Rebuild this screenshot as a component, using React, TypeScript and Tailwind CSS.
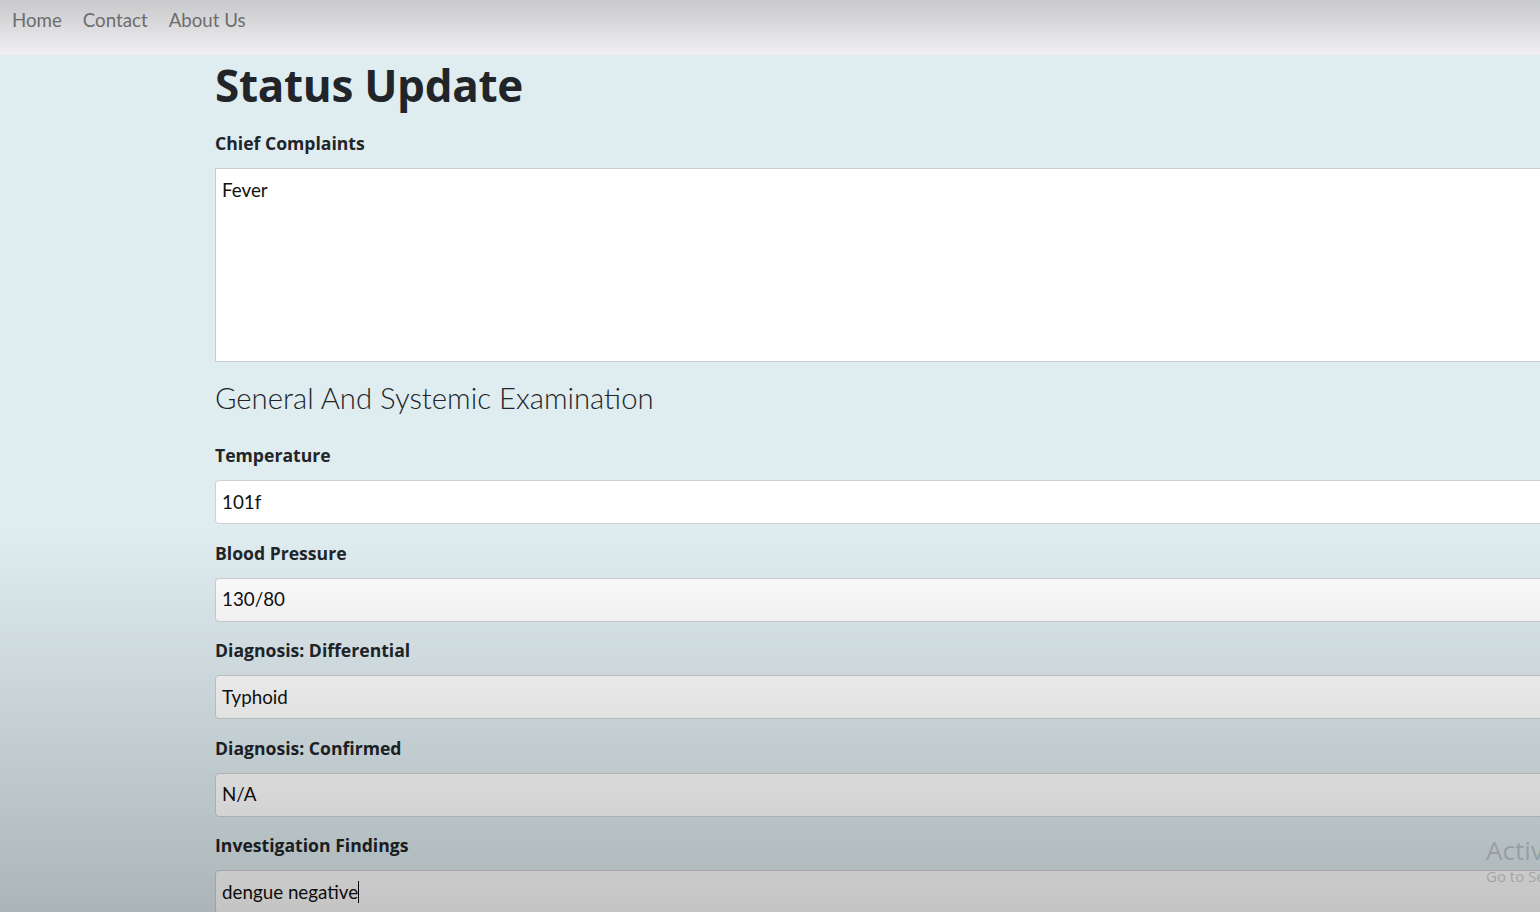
import React from 'react';

const fields = [
  { label: 'Temperature', value: '101f' },
  { label: 'Blood Pressure', value: '130/80' },
  { label: 'Diagnosis: Differential', value: 'Typhoid' },
  { label: 'Diagnosis: Confirmed', value: 'N/A' },
  { label: 'Investigation Findings', value: 'dengue negative', caret: true },
];

const App: React.FC = () => {
  return (
    <div className="relative h-[912px] overflow-hidden bg-[#dfecf0] font-['Lato',sans-serif] text-[#212529]">
      {/* Top nav */}
      <nav className="h-[55px] bg-linear-to-b from-[#c8c9cb] to-[#f1eff1] flex items-start gap-[21px] px-[12px] pt-[8px] text-[18.7px] leading-[24px] text-[#6c6c6c]">
        <a>Home</a>
        <a>Contact</a>
        <a>About Us</a>
      </nav>

      {/* Form */}
      <div className="pl-[215px] w-[1700px]">
        <h1 className="mt-[3px] font-['Open_Sans',sans-serif] text-[44px] font-bold leading-[55px] h-[55px] tracking-[-0.3px]">Status Update</h1>

        <label className="block mt-[18px] font-['Open_Sans',sans-serif] text-[17.6px] font-bold leading-[24px]">Chief Complaints</label>
        <div className="mt-[13px] h-[194px] w-[1400px] bg-white border border-[#c9cdd1] px-[6px] pt-[9px] text-[18.8px] leading-[24px] text-[#111]">
          Fever
        </div>

        <h2 className="mt-[19px] text-[29.3px] font-light leading-[34px]">General And Systemic Examination</h2>

        <div className="mt-[28px] flex flex-col gap-[16.5px]">
          {fields.map((f) => (
            <div key={f.label} className="flex flex-col gap-[13px]">
              <label className="block font-['Open_Sans',sans-serif] text-[17.6px] font-bold leading-[24px]">{f.label}</label>
              <div className="h-[44px] w-[1400px] bg-white border border-[#cdd1d4] rounded-[4px] px-[6px] flex items-center text-[18.8px] text-[#111]">
                {f.value}
                {f.caret && <span className="inline-block w-px h-[22px] bg-black" />}
              </div>
            </div>
          ))}
        </div>
      </div>

      {/* video dimming towards the bottom */}
      <div className="pointer-events-none absolute inset-0 bg-linear-to-b from-transparent from-58% to-[rgba(0,0,0,0.23)]" />

      {/* windows activation watermark */}
      <div className="pointer-events-none absolute left-[1486px] top-[835px] font-['Open_Sans',sans-serif] text-[rgba(125,125,125,0.5)] whitespace-nowrap">
        <div className="text-[26px] leading-[31px]">Activate Windows</div>
        <div className="text-[15px] leading-[20px]">Go to Settings to activate Windows.</div>
      </div>
    </div>
  );
};

export default App;
